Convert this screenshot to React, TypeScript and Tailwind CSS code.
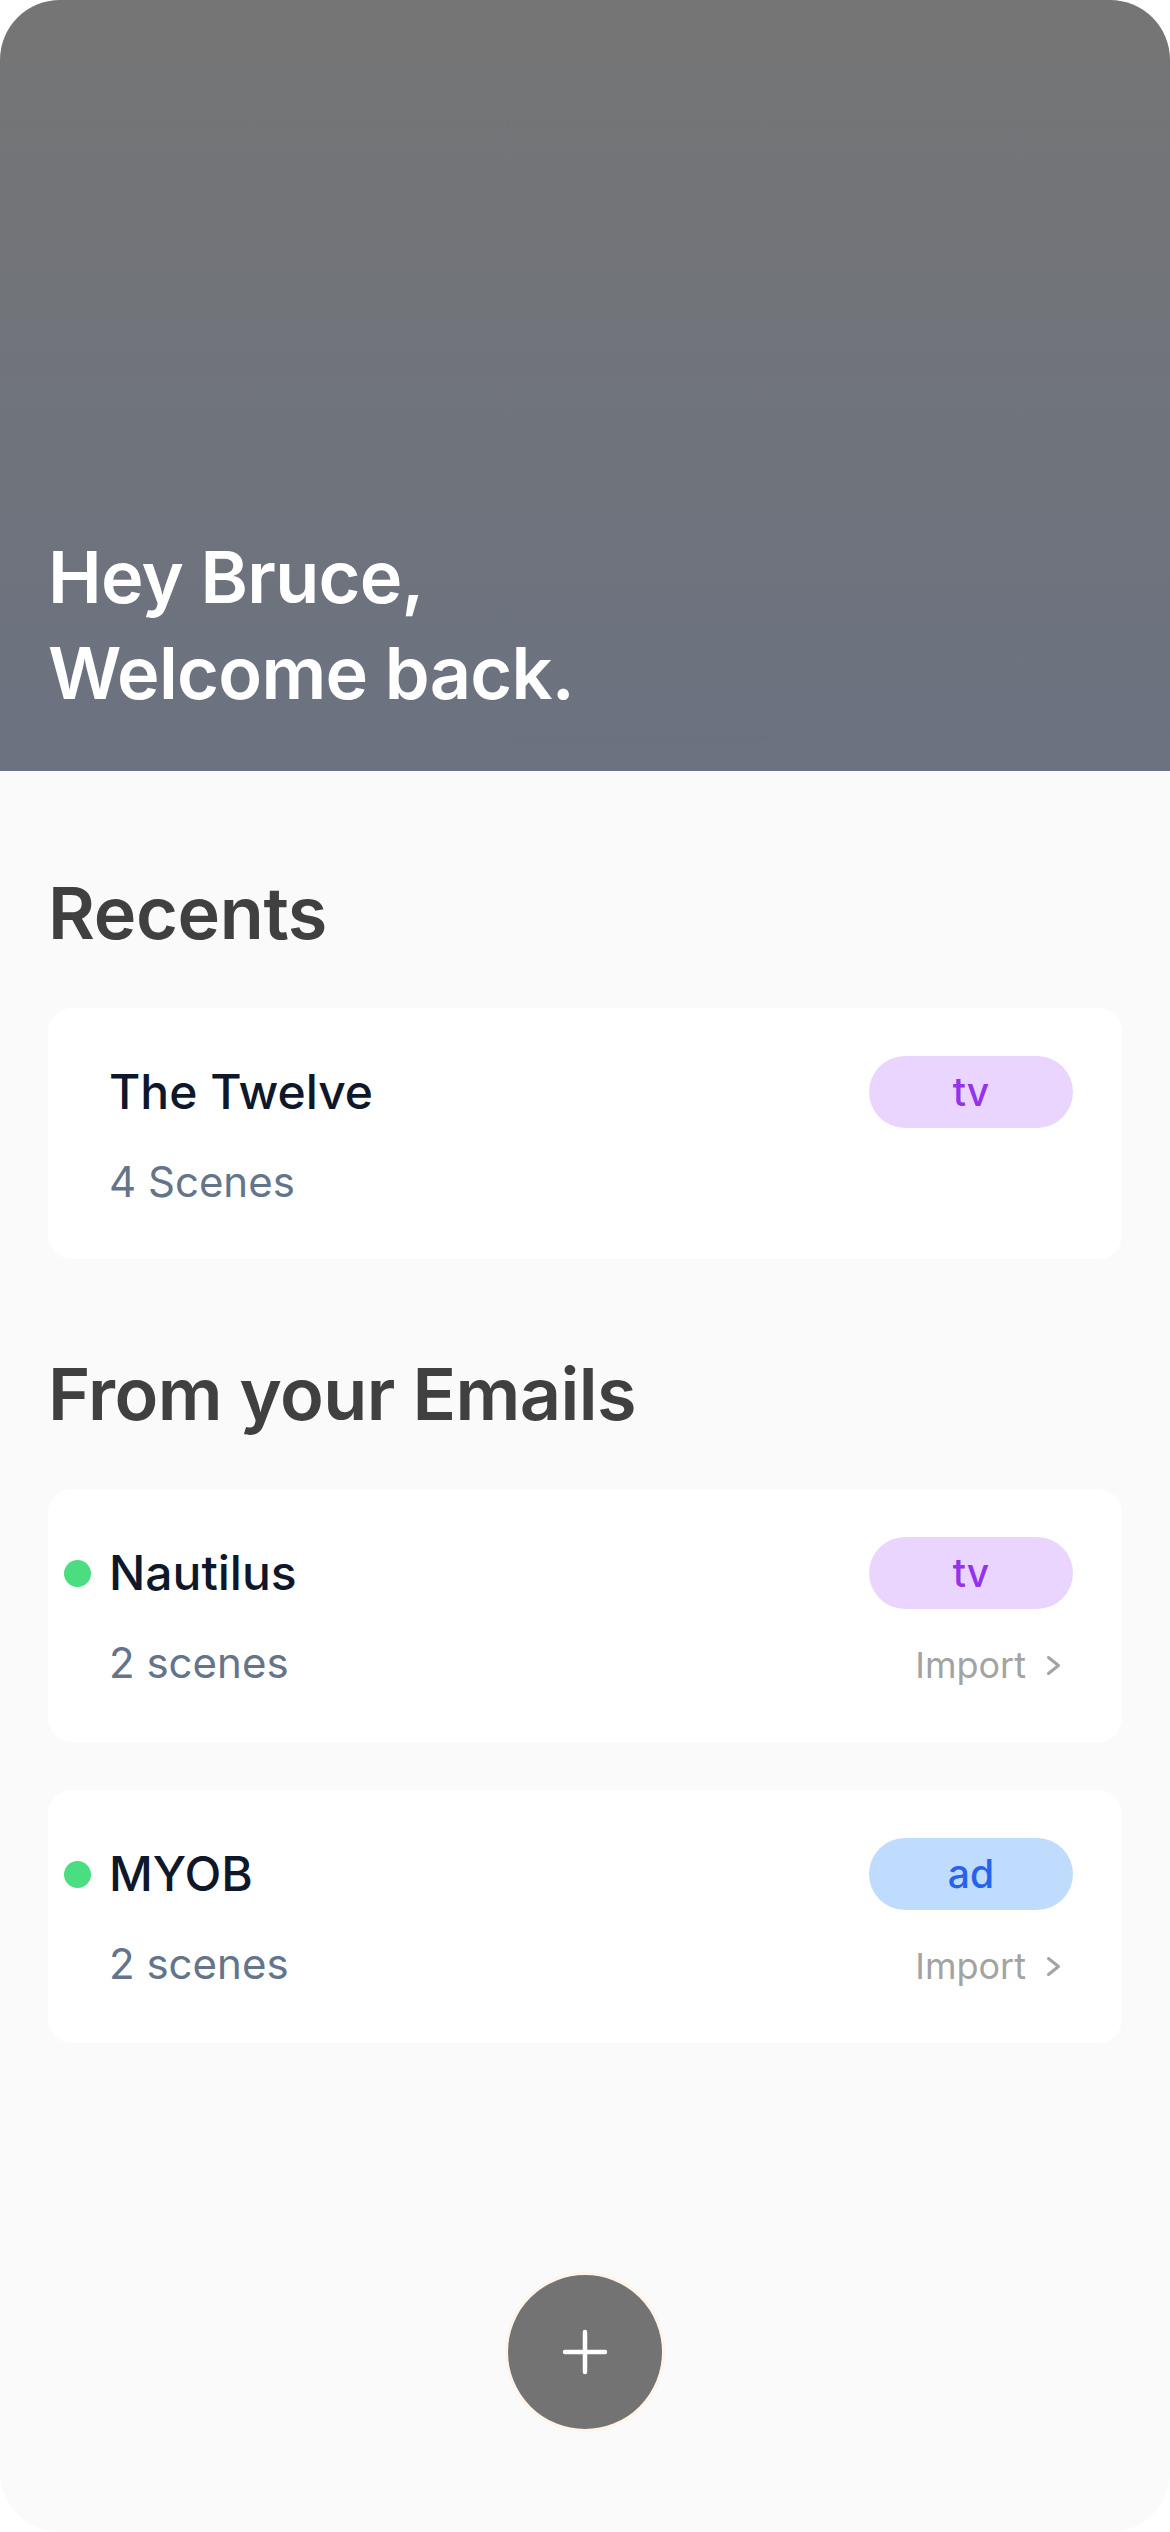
import React from "react";

type Tag = "tv" | "ad";

const tagStyles: Record<Tag, string> = {
  tv: "bg-[#e9d5ff] text-[#9333ea]",
  ad: "bg-[#bfdbfe] text-[#2563eb]",
};

function Chevron() {
  return (
    <svg width="16" height="21" viewBox="0 0 16 21" fill="none">
      <path
        d="M2.5 2.5 L12.5 10.5 L2.5 18.5"
        stroke="#a3a3a3"
        strokeWidth="3"
        strokeLinecap="round"
        strokeLinejoin="round"
      />
    </svg>
  );
}

function SceneCard({
  title,
  subtitle,
  tag,
  isNew = false,
  importable = false,
}: {
  title: string;
  subtitle: string;
  tag: Tag;
  isNew?: boolean;
  importable?: boolean;
}) {
  return (
    <div className="rounded-[24px] bg-white pl-[61px] pr-[49px] pt-[48px] pb-[47px]">
      <div className="flex h-[72px] items-center justify-between">
        <div className="flex items-center">
          {isNew && (
            <span className="-ml-[45px] mr-[18px] h-[27px] w-[27px] rounded-full bg-[#4ade80]" />
          )}
          <span className="text-[48px] leading-[72px] font-medium text-[#0f172a]">
            {title}
          </span>
        </div>
        <span
          className={`flex h-[72px] w-[204px] items-center justify-center rounded-full text-[39px] font-medium ${tagStyles[tag]}`}
        >
          {tag}
        </span>
      </div>
      <div className="mt-[24px] flex items-baseline justify-between">
        <span className="text-[42px] leading-[60px] text-[#64748b]">{subtitle}</span>
        {importable && (
          <span className="mr-[11px] flex items-center gap-[20px] text-[36px] leading-[60px] text-[#a3a3a3]">
            Import
            <Chevron />
          </span>
        )}
      </div>
    </div>
  );
}

export default function App() {
  return (
    <div className="min-h-screen bg-white font-['Inter','Noto_Sans',sans-serif]">
      <div className="flex h-[2532px] w-[1170px] flex-col overflow-hidden rounded-[60px] bg-[#fafafa]">
        {/* Greeting header */}
        <header className="flex h-[771px] flex-col justify-end bg-linear-to-b from-[#757575] to-[#6b7280] px-[48px] pb-[50px]">
          <h1 className="text-[72px] leading-[96px] font-semibold tracking-[-0.01em] text-white">
            Hey Bruce,
            <br />
            Welcome back.
          </h1>
        </header>

        <main className="flex flex-1 flex-col px-[48px]">
          <h2 className="mt-[94px] text-[72px] leading-[96px] font-semibold tracking-[-0.005em] text-[#404040]">
            Recents
          </h2>
          <div className="mt-[47px]">
            <SceneCard title="The Twelve" subtitle="4 Scenes" tag="tv" />
          </div>

          <h2 className="mt-[87px] text-[72px] leading-[96px] font-semibold tracking-[-0.008em] text-[#404040]">
            From your Emails
          </h2>
          <div className="mt-[47px] flex flex-col gap-[48px]">
            <SceneCard title="Nautilus" subtitle="2 scenes" tag="tv" isNew importable />
            <SceneCard title="MYOB" subtitle="2 scenes" tag="ad" isNew importable />
          </div>

          {/* Add button */}
          <button className="mt-auto mb-[100px] flex h-[160px] w-[160px] items-center justify-center self-center rounded-full border-[3px] border-[#fff4ea] bg-[#737373]">
            <svg width="48" height="48" viewBox="0 0 48 48" fill="none">
              <path
                d="M4 24 H44 M24 4 V44"
                stroke="white"
                strokeWidth="4.5"
                strokeLinecap="round"
              />
            </svg>
          </button>
        </main>
      </div>
    </div>
  );
}
